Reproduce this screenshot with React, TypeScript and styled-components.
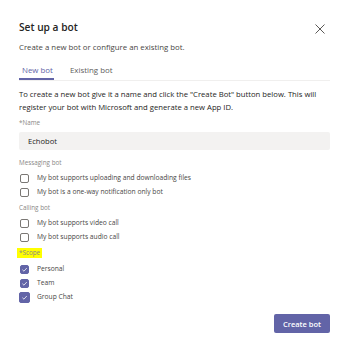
import React, { useState } from 'react';
import styled, { createGlobalStyle } from 'styled-components';

const GlobalStyle = createGlobalStyle`
  body {
    margin: 0;
    background: #ffffff;
    font-family: "Open Sans", "Noto Sans", sans-serif;
    color: #252423;
  }
`;

const Dialog = styled.div`
  width: 349px;
  height: 351px;
  box-sizing: border-box;
  padding: 20px 19px 0 19px;
  display: flex;
  flex-direction: column;
`;

const Header = styled.div`
  display: flex;
  align-items: center;
  justify-content: space-between;
  height: 14px;
`;

const Title = styled.h2`
  margin: 0;
  font-size: 10.2px;
  font-weight: 600;
  line-height: 14px;
  color: #252423;
`;

const CloseButton = styled.button`
  border: none;
  background: none;
  padding: 0;
  width: 11px;
  height: 11px;
  margin-right: 5px;
  margin-top: 4px;
  display: flex;
  align-items: center;
  justify-content: center;
  cursor: pointer;
`;

const Subtitle = styled.p`
  margin: 7px 0 0 0;
  font-size: 7.8px;
  line-height: 12px;
  color: #484644;
`;

const Tabs = styled.div`
  display: flex;
  gap: 13px;
  margin-top: 8px;
  border-bottom: 1px solid #f0efee;
`;

const Tab = styled.button<{ $active?: boolean }>`
  border: none;
  background: none;
  font-family: inherit;
  font-size: 7.9px;
  line-height: 11px;
  padding: 4px 1px 2px 3px;
  color: ${({ $active }) => ($active ? '#6264a7' : '#605e5c')};
  border-bottom: 2px solid ${({ $active }) => ($active ? '#6264a7' : 'transparent')};
  cursor: pointer;
`;

const Intro = styled.p`
  margin: 7px 0 0 0;
  font-size: 7.7px;
  line-height: 13px;
  color: #252423;
`;

const FieldLabel = styled.div<{ $mark?: boolean; $gap: number }>`
  font-size: 6.3px;
  line-height: 10px;
  color: #8a8886;
  margin-top: ${({ $gap }) => $gap}px;
  align-self: flex-start;
  background: ${({ $mark }) => ($mark ? '#ffff00' : 'transparent')};
  padding: ${({ $mark }) => ($mark ? '0 2px' : '0')};
  margin-left: ${({ $mark }) => ($mark ? '-2px' : '0')};
`;

const Input = styled.input`
  margin-top: 4px;
  height: 18px;
  box-sizing: border-box;
  border: none;
  border-radius: 2px;
  background: #f3f2f1;
  padding: 0 9px;
  font-family: inherit;
  font-size: 7.6px;
  color: #252423;
  outline: none;
`;

const CheckList = styled.div<{ $gap: number }>`
  display: flex;
  flex-direction: column;
  gap: 4px;
  margin-top: ${({ $gap }) => $gap}px;
`;

const CheckRow = styled.label`
  display: flex;
  align-items: center;
  gap: 8px;
  height: 10px;
  padding-left: 1px;
  font-size: 6.7px;
  line-height: 10px;
  color: #484644;
  cursor: pointer;
`;

const Box = styled.span<{ $checked: boolean; $focus?: boolean }>`
  width: ${({ $focus }) => ($focus ? 11 : 9)}px;
  height: ${({ $focus }) => ($focus ? 11 : 9)}px;
  margin: ${({ $focus }) => ($focus ? '0 -1px 0 -1px' : '0')};
  border-radius: 2px;
  box-sizing: border-box;
  border: 1px solid ${({ $checked }) => ($checked ? '#6264a7' : '#7a7774')};
  background: ${({ $checked }) => ($checked ? '#6264a7' : '#ffffff')};
  display: flex;
  align-items: center;
  justify-content: center;
  flex-shrink: 0;
`;

const Footer = styled.div`
  display: flex;
  justify-content: flex-end;
  margin-top: 12px;
`;

const PrimaryButton = styled.button`
  width: 56px;
  height: 19px;
  padding: 0;
  border: none;
  border-radius: 2px;
  background: #6264a7;
  color: #ffffff;
  font-family: inherit;
  font-size: 7.5px;
  font-weight: 600;
  white-space: nowrap;
  cursor: pointer;
`;

const Check: React.FC<{ label: string; checked: boolean; focus?: boolean; onToggle: () => void }> = ({
  label,
  checked,
  focus,
  onToggle,
}) => (
  <CheckRow onClick={onToggle}>
    <Box $checked={checked} $focus={focus}>
      {checked && (
        <svg width="7" height="7" viewBox="0 0 10 10">
          <path d="M2 5.3 L4.2 7.4 L8.3 2.9" fill="none" stroke="#ffffff" strokeWidth="1.1" />
        </svg>
      )}
    </Box>
    {label}
  </CheckRow>
);

const App: React.FC = () => {
  const [tab, setTab] = useState<'new' | 'existing'>('new');
  const [checks, setChecks] = useState<Record<string, boolean>>({
    files: false,
    notify: false,
    video: false,
    audio: false,
    personal: true,
    team: true,
    group: true,
  });

  const toggle = (key: string) => setChecks((c) => ({ ...c, [key]: !c[key] }));

  return (
    <>
      <GlobalStyle />
      <Dialog>
        <Header>
          <Title>Set up a bot</Title>
          <CloseButton aria-label="Close">
            <svg width="10" height="10" viewBox="0 0 10 10">
              <path d="M0.5 0.5 L9.5 9.5 M9.5 0.5 L0.5 9.5" stroke="#484644" strokeWidth="0.9" />
            </svg>
          </CloseButton>
        </Header>
        <Subtitle>Create a new bot or configure an existing bot.</Subtitle>
        <Tabs>
          <Tab $active={tab === 'new'} onClick={() => setTab('new')}>New bot</Tab>
          <Tab $active={tab === 'existing'} onClick={() => setTab('existing')}>Existing bot</Tab>
        </Tabs>
        <Intro>
          To create a new bot give it a name and click the "Create Bot" button below. This will register your bot with Microsoft and generate a new App ID.
        </Intro>
        <FieldLabel $gap={4}>*Name</FieldLabel>
        <Input defaultValue="Echobot" />
        <FieldLabel $gap={8}>Messaging bot</FieldLabel>
        <CheckList $gap={5}>
          <Check label="My bot supports uploading and downloading files" checked={checks.files} onToggle={() => toggle('files')} />
          <Check label="My bot is a one-way notification only bot" checked={checks.notify} onToggle={() => toggle('notify')} />
        </CheckList>
        <FieldLabel $gap={6}>Calling bot</FieldLabel>
        <CheckList $gap={5}>
          <Check label="My bot supports video call" checked={checks.video} onToggle={() => toggle('video')} />
          <Check label="My bot supports audio call" checked={checks.audio} onToggle={() => toggle('audio')} />
        </CheckList>
        <FieldLabel $mark $gap={6}>*Scope</FieldLabel>
        <CheckList $gap={6}>
          <Check label="Personal" checked={checks.personal} onToggle={() => toggle('personal')} />
          <Check label="Team" checked={checks.team} onToggle={() => toggle('team')} />
          <Check label="Group Chat" checked={checks.group} focus onToggle={() => toggle('group')} />
        </CheckList>
        <Footer>
          <PrimaryButton>Create bot</PrimaryButton>
        </Footer>
      </Dialog>
    </>
  );
};

export default App;
